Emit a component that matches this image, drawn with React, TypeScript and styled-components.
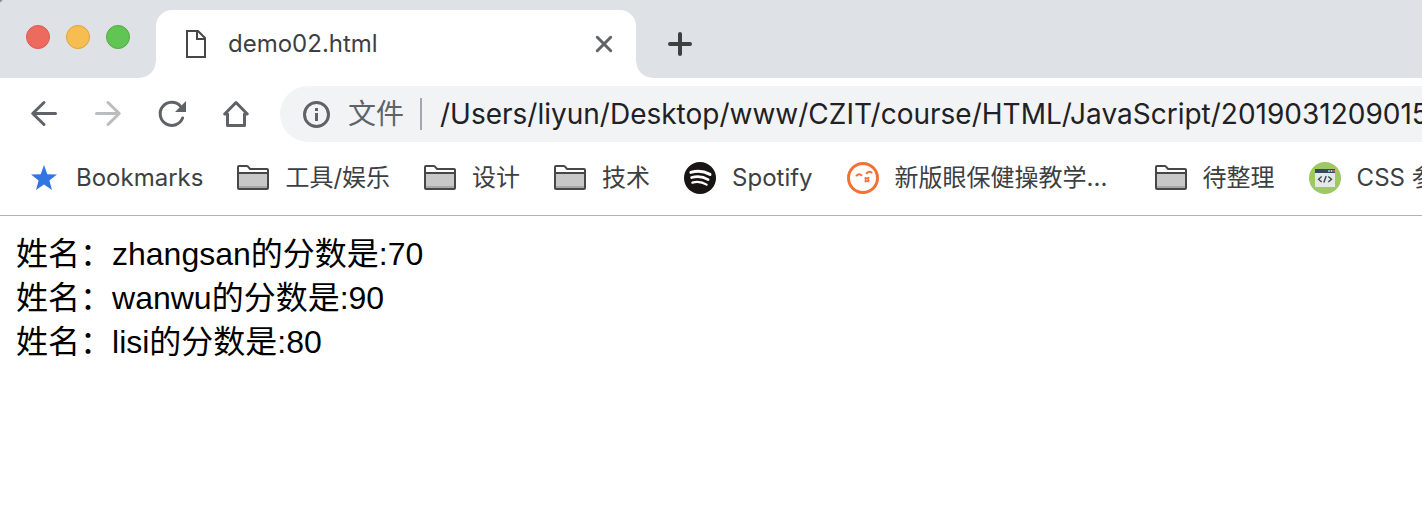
import React from "react";
import styled, { createGlobalStyle } from "styled-components";

const uiFont = `Inter, "Noto Sans CJK SC", sans-serif`;

const GlobalStyle = createGlobalStyle`
  * { box-sizing: border-box; }
  body {
    margin: 0;
    background: #fff;
    font-family: ${uiFont};
    overflow-x: hidden;
  }
`;

const Browser = styled.div`
  display: flex;
  flex-direction: column;
  overflow: hidden;
`;

const TabStrip = styled.header`
  display: flex;
  align-items: flex-end;
  height: 78px;
  background: radial-gradient(circle at 0 0, #85878a 1px, transparent 3px), #dee1e6;
`;

const WindowControls = styled.div`
  display: flex;
  align-self: flex-start;
  gap: 16px;
  width: 156px;
  padding: 25px 0 0 26px;
`;

const WindowButton = styled.button<{ $fill: string; $edge: string }>`
  width: 24px;
  height: 24px;
  padding: 0;
  border: 1px solid ${(p) => p.$edge};
  border-radius: 50%;
  background: ${(p) => p.$fill};
`;

const Tab = styled.div`
  position: relative;
  display: flex;
  align-items: center;
  width: 480px;
  height: 68px;
  padding: 0 20px 0 28px;
  border-radius: 16px 16px 0 0;
  background: #fff;

  &::before,
  &::after {
    content: "";
    position: absolute;
    bottom: 0;
    width: 16px;
    height: 16px;
  }
  &::before {
    right: 100%;
    background: radial-gradient(circle at 0 0, transparent 15px, #fff 16px);
  }
  &::after {
    left: 100%;
    background: radial-gradient(circle at 100% 0, transparent 15px, #fff 16px);
  }
`;

const TabTitle = styled.span`
  flex: 1;
  margin-left: 20px;
  color: #3c4043;
  font-size: 24px;
  line-height: 32px;
`;

const IconButton = styled.button<{ $size: number }>`
  display: flex;
  align-items: center;
  justify-content: center;
  width: ${(p) => p.$size}px;
  height: ${(p) => p.$size}px;
  padding: 0;
  border: 0;
  background: none;
`;

const NewTab = styled.div`
  align-self: center;
  padding: 10px 0 0 28px;
`;

const Toolbar = styled.nav`
  display: flex;
  align-items: center;
  gap: 28px;
  padding: 8px 0 0 28px;
`;

const NavButtons = styled.div`
  display: flex;
  gap: 32px;
`;

const AddressBar = styled.label`
  display: flex;
  flex: 1;
  align-items: center;
  min-width: 0;
  height: 56px;
  padding-left: 20px;
  border-radius: 28px 0 0 28px;
  background: #f1f3f4;
`;

const Scheme = styled.span`
  margin-left: 16px;
  padding-right: 16px;
  border-right: 2px solid #a5a7aa;
  color: #5f6368;
  font-size: 28px;
  line-height: 32px;
`;

const AddressInput = styled.input`
  flex: 1;
  min-width: 0;
  margin-left: 18px;
  padding: 0;
  border: 0;
  outline: 0;
  background: none;
  color: #202124;
  font-family: ${uiFont};
  font-size: 28px;
`;

const BookmarksBar = styled.nav`
  display: flex;
  align-items: center;
  gap: 34px;
  height: 74px;
  padding: 0 0 2px 28px;
  border-bottom: 1px solid #b3b3b3;
`;

const Bookmark = styled.a<{ $wide?: boolean }>`
  display: flex;
  flex: none;
  align-items: center;
  gap: 16px;
  width: ${(p) => (p.$wide ? "274px" : "auto")};
  color: #3c4043;
  font-size: 24px;
  line-height: 32px;
  text-decoration: none;
  white-space: nowrap;
`;

const Page = styled.main`
  padding: 16px;
  color: #000;
  font-family: "Liberation Sans", "Noto Sans CJK SC", sans-serif;
  font-size: 32px;
  line-height: 44px;
`;

const Line = styled.p`
  margin: 0;
`;

const Svg = styled.svg`
  display: block;
  flex: none;
`;

const FileIcon = () => (
  <Svg width="24" height="32" viewBox="0 0 24 32" fill="none" stroke="#474747" strokeWidth="2">
    <path d="M3 3H14L21 10V29H3Z" />
    <path d="M13 3V11H21" />
  </Svg>
);

const CloseIcon = () => (
  <Svg width="24" height="24" viewBox="0 0 24 24" stroke="#5f6368" strokeWidth="3" strokeLinecap="round">
    <path d="M5.3 5.3L18.7 18.7M18.7 5.3L5.3 18.7" />
  </Svg>
);

const PlusIcon = () => (
  <Svg width="32" height="32" viewBox="0 0 32 32" stroke="#3c4043" strokeWidth="4" strokeLinecap="round">
    <path d="M16 6V26M6 16H26" />
  </Svg>
);

const BackIcon = ({ color }: { color: string }) => (
  <Svg width="32" height="32" viewBox="0 0 32 32" fill="none" stroke={color} strokeWidth="3" strokeLinecap="round" strokeLinejoin="round">
    <path d="M27.5 15.5H5M16 4.5L4.7 15.5L16 26.5" />
  </Svg>
);

const ForwardIcon = ({ color }: { color: string }) => (
  <Svg width="32" height="32" viewBox="0 0 32 32" fill="none" stroke={color} strokeWidth="3" strokeLinecap="round" strokeLinejoin="round">
    <path d="M4.5 15.5H27M16 4.5L27.3 15.5L16 26.5" />
  </Svg>
);

const ReloadIcon = () => (
  <Svg width="32" height="32" viewBox="0 0 32 32" fill="none">
    <path d="M26.6 20A11.6 11.6 0 1 1 24.3 7.9" stroke="#5f6368" strokeWidth="3" strokeLinecap="round" />
    <path d="M30 3V14H19Z" fill="#5f6368" />
  </Svg>
);

const HomeIcon = () => (
  <Svg width="32" height="32" viewBox="0 0 32 32" fill="none" stroke="#5f6368" strokeWidth="3" strokeLinejoin="round" strokeLinecap="round">
    <path d="M4.7 16L16 4.5L27.3 16H24.5V27.5H7.5V16Z" />
  </Svg>
);

const InfoIcon = () => (
  <Svg width="32" height="32" viewBox="0 0 32 32" fill="none">
    <circle cx="16.5" cy="16.5" r="12" stroke="#5f6368" strokeWidth="3" />
    <path d="M15 10H18V13H15ZM15 15H18V23H15Z" fill="#5f6368" />
  </Svg>
);

const StarIcon = () => (
  <Svg width="32" height="32" viewBox="0 0 32 32">
    <path d="M16 3L19.3 12.2L29 12.6L21.4 18.6L24 28L16 22.6L8 28L10.6 18.6L3 12.6L12.7 12.2Z" fill="#3376e3" />
  </Svg>
);

const FolderIcon = () => (
  <Svg width="32" height="32" viewBox="0 0 32 32" fill="none">
    <path d="M2 11H30V26H2Z" fill="#c8c8c8" />
    <path d="M2 24H30V26H2Z" fill="#a8a8a8" />
    <path d="M1 26V5Q1 4 2 4H9.6Q10.4 4 11 4.7L13 7H30Q31 7 31 8V26Q31 27 30 27H2Q1 27 1 26ZM1 11H31" stroke="#474747" strokeWidth="2" />
  </Svg>
);

const SpotifyIcon = () => (
  <Svg width="32" height="32" viewBox="0 0 32 32" fill="none" stroke="#fff" strokeLinecap="round">
    <circle cx="16" cy="16" r="16" fill="#191414" stroke="none" />
    <path d="M6.8 10.4Q17 7.4 26 12.4" strokeWidth="3" />
    <path d="M7.6 15.6Q16.5 13 24.2 17.6" strokeWidth="2.6" />
    <path d="M8.4 20.6Q16 18.6 22.6 22.6" strokeWidth="2.2" />
  </Svg>
);

const FaceIcon = () => (
  <Svg width="32" height="32" viewBox="0 0 32 32" fill="none" stroke="#f37233">
    <circle cx="16" cy="16" r="14.5" strokeWidth="3" />
    <path d="M9 14.2Q12 10.6 15 13.8M19.2 11.8Q22 8 25.2 11" strokeWidth="2" />
    <path d="M17.5 16.6L22.5 15.8M17.5 19.2L22.5 18.6M18.6 15L19 20.4M21 15L21.4 20.2" strokeWidth="1.5" />
  </Svg>
);

const CodeIcon = () => (
  <Svg width="32" height="32" viewBox="0 0 32 32" fill="none">
    <circle cx="16" cy="16" r="16" fill="#9dc862" />
    <path d="M6 7H26V25H6Z" fill="#e6e8e3" />
    <path d="M6 7H26V11H6Z" fill="#324a5e" />
    <circle cx="20" cy="9" r="1" fill="#84dbff" />
    <circle cx="22.5" cy="9" r="1" fill="#ffd05b" />
    <circle cx="25" cy="9" r="1" fill="#fd5f4f" />
    <path d="M12.7 14.5L9.5 17.2L12.7 20M19.3 14.5L22.5 17.2L19.3 20M17.2 14L14.8 20.5" stroke="#324a5e" strokeWidth="1.4" />
  </Svg>
);

const bookmarks = [
  { label: "Bookmarks", Icon: StarIcon },
  { label: "工具/娱乐", Icon: FolderIcon },
  { label: "设计", Icon: FolderIcon },
  { label: "技术", Icon: FolderIcon },
  { label: "Spotify", Icon: SpotifyIcon },
  { label: "新版眼保健操教学...", Icon: FaceIcon, wide: true },
  { label: "待整理", Icon: FolderIcon },
  { label: "CSS 参", Icon: CodeIcon },
];

const scores = [
  { name: "zhangsan", score: 70 },
  { name: "wanwu", score: 90 },
  { name: "lisi", score: 80 },
];

export default function App() {
  return (
    <>
      <GlobalStyle />
      <Browser>
        <TabStrip>
          <WindowControls>
            <WindowButton aria-label="Close window" $fill="#ed6a5f" $edge="#e0574c" />
            <WindowButton aria-label="Minimize window" $fill="#f6be50" $edge="#dfa23c" />
            <WindowButton aria-label="Zoom window" $fill="#61c555" $edge="#50ad3e" />
          </WindowControls>
          <Tab>
            <FileIcon />
            <TabTitle>demo02.html</TabTitle>
            <IconButton $size={24} aria-label="Close tab"><CloseIcon /></IconButton>
          </Tab>
          <NewTab>
            <IconButton $size={32} aria-label="New tab"><PlusIcon /></IconButton>
          </NewTab>
        </TabStrip>
        <Toolbar>
          <NavButtons>
            <IconButton $size={32} aria-label="Back"><BackIcon color="#5f6368" /></IconButton>
            <IconButton $size={32} aria-label="Forward"><ForwardIcon color="#babcbe" /></IconButton>
            <IconButton $size={32} aria-label="Reload"><ReloadIcon /></IconButton>
            <IconButton $size={32} aria-label="Home"><HomeIcon /></IconButton>
          </NavButtons>
          <AddressBar>
            <InfoIcon />
            <Scheme>文件</Scheme>
            <AddressInput
              aria-label="Address"
              defaultValue="/Users/liyun/Desktop/www/CZIT/course/HTML/JavaScript/2019031209015"
            />
          </AddressBar>
        </Toolbar>
        <BookmarksBar>
          {bookmarks.map(({ label, Icon, wide }) => (
            <Bookmark key={label} href="#" $wide={wide}>
              <Icon />
              {label}
            </Bookmark>
          ))}
        </BookmarksBar>
        <Page>
          {scores.map(({ name, score }) => (
            <Line key={name}>
              姓名：{name}的分数是:{score}
            </Line>
          ))}
        </Page>
      </Browser>
    </>
  );
}
